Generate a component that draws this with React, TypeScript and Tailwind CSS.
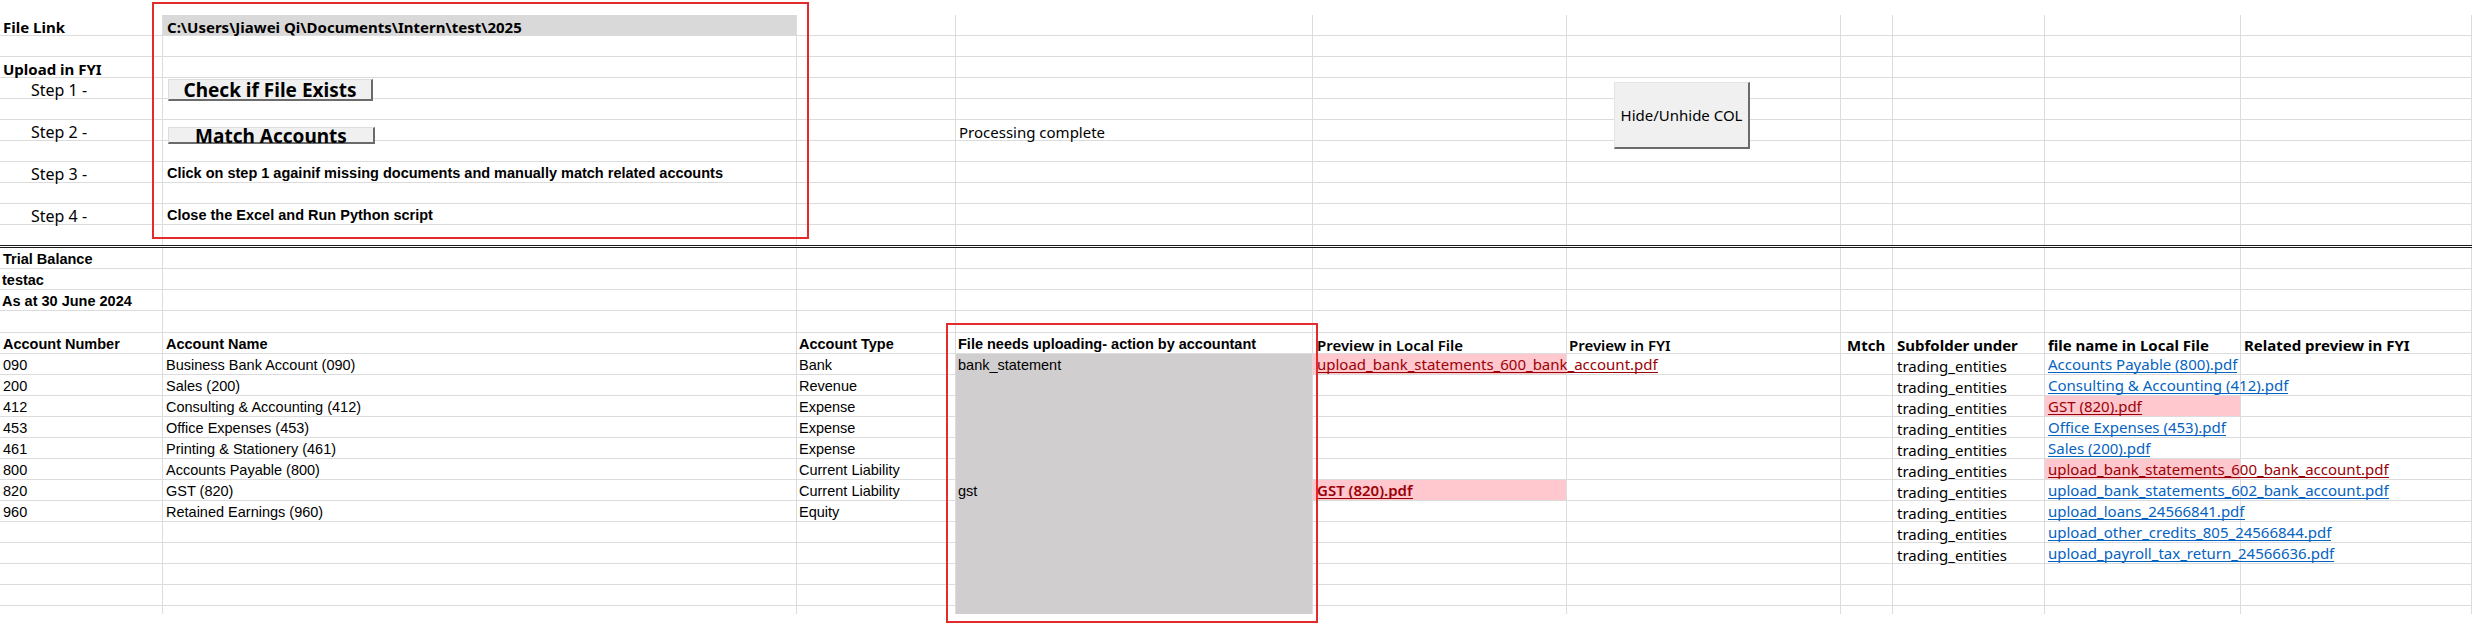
import React from 'react';

type C = { t?: React.ReactNode; c?: string };

// column widths incl. the 1px right grid line
const W = ['w-[163px]', 'w-[634px]', 'w-[159px]', 'w-[357px]', 'w-[254px]', 'w-[274px]', 'w-[52px]', 'w-[152px]', 'w-[196px]', 'grow'];

const noto = "shrink-0 font-['Noto_Sans',sans-serif] text-[15px] leading-[16px]";
const arial = "shrink-0 font-['Liberation_Sans',Arial,sans-serif] text-[14.5px] leading-[16px] mb-[1px]";
const gray = 'bg-[#d0cece] border-b-[#d0cece]';
const pink = 'bg-[#ffc7ce]';
const blue = 'text-[#0563c1] border-b border-[#0563c1] leading-[15px]';
const red = 'text-[#9c0006] border-b border-[#9c0006] leading-[15px]';

function Row({ cells = {}, h = 'h-[21px]', noLine = false }: { cells?: Record<number, C>; h?: string; noLine?: boolean }) {
    return (
        <div className={`flex ${h}`}>
            {W.map((w, i) => {
                const cell = cells[i] || {};
                return (
                    <div
                        key={i}
                        className={`${w} shrink-0 border-r border-[#dcdcdc] ${noLine ? '' : 'border-b'} flex items-end whitespace-nowrap ${cell.c ?? ''}`}
                    >
                        {cell.t}
                    </div>
                );
            })}
        </div>
    );
}

const N = (t: string, extra = '') => <span className={`${noto} ${extra}`}>{t}</span>;
const A = (t: string, extra = '') => <span className={`${arial} ${extra}`}>{t}</span>;

const accounts = [
    ['090', 'Business Bank Account (090)', 'Bank'],
    ['200', 'Sales (200)', 'Revenue'],
    ['412', 'Consulting & Accounting (412)', 'Expense'],
    ['453', 'Office Expenses (453)', 'Expense'],
    ['461', 'Printing & Stationery (461)', 'Expense'],
    ['800', 'Accounts Payable (800)', 'Current Liability'],
    ['820', 'GST (820)', 'Current Liability'],
    ['960', 'Retained Earnings (960)', 'Equity'],
];

const localFiles = [
    'Accounts Payable (800).pdf',
    'Consulting & Accounting (412).pdf',
    'GST (820).pdf',
    'Office Expenses (453).pdf',
    'Sales (200).pdf',
    'upload_bank_statements_600_bank_account.pdf',
    'upload_bank_statements_602_bank_account.pdf',
    'upload_loans_24566841.pdf',
    'upload_other_credits_805_24566844.pdf',
    'upload_payroll_tax_return_24566636.pdf',
];

const missing = [2, 5];

function dataRow(i: number): Record<number, C> {
    const acc = accounts[i];
    const cells: Record<number, C> = { 3: { c: gray } };
    if (acc) {
        cells[0] = { t: A(acc[0]), c: 'pl-[3px]' };
        cells[1] = { t: A(acc[1]), c: 'pl-[3px]' };
        cells[2] = { t: A(acc[2]), c: 'pl-[2px]' };
    }
    if (i === 0) {
        cells[3] = { t: A('bank_statement'), c: `${gray} pl-[2px]` };
        cells[4] = { t: N('upload_bank_statements_600_bank_account.pdf', red), c: `${pink} pl-[4px] pb-[1px]` };
    }
    if (i === 6) {
        cells[3] = { t: A('gst'), c: `${gray} pl-[2px]` };
        cells[4] = { t: N('GST (820).pdf', `${red} font-semibold`), c: `${pink} pl-[4px] pb-[1px]` };
    }
    const f = localFiles[i];
    if (f) {
        cells[7] = { t: N('trading_entities'), c: 'pl-[4px]' };
        const bad = missing.includes(i);
        cells[8] = { t: N(f, bad ? red : blue), c: `pl-[3px] pb-[1px] ${bad ? pink : ''}` };
    }
    return cells;
}

export default function App() {
    const head = `${noto} font-bold`;
    const note = "font-['Liberation_Sans',Arial,sans-serif] text-[14.5px] leading-[16px] font-bold mb-[1px]";
    return (
        <div className="relative w-[2472px] h-[624px] bg-white overflow-hidden text-black">
            <div className="h-[15px]" />

            {/* control panel */}
            <Row
                cells={{
                    0: { t: N('File Link', 'font-bold'), c: 'pl-[3px]' },
                    1: { t: N('C:\\Users\\Jiawei Qi\\Documents\\Intern\\test\\2025', 'font-bold'), c: 'bg-[#d9d9d9] pl-[4px]' },
                }}
            />
            <Row />
            <Row cells={{ 0: { t: N('Upload in FYI', 'font-bold'), c: 'pl-[3px]' } }} />
            <Row cells={{ 0: { t: N('Step 1 -', 'text-[16px]'), c: 'pl-[31px]' } }} />
            <Row />
            <Row cells={{ 0: { t: N('Step 2 -', 'text-[16px]'), c: 'pl-[31px]' }, 3: { t: N('Processing complete'), c: 'pl-[3px]' } }} />
            <Row />
            <Row
                cells={{
                    0: { t: N('Step 3 -', 'text-[16px]'), c: 'pl-[31px]' },
                    1: { t: <span className={note}>Click on step 1 againif missing documents and manually match related accounts</span>, c: 'pl-[4px]' },
                }}
            />
            <Row />
            <Row
                cells={{
                    0: { t: N('Step 4 -', 'text-[16px]'), c: 'pl-[31px]' },
                    1: { t: <span className={note}>Close the Excel and Run Python script</span>, c: 'pl-[4px]' },
                }}
            />
            <div className="border-b-[3px] border-double border-[#1a1a1a]">
                <Row h="h-[20px]" noLine />
            </div>

            {/* trial balance */}
            <Row cells={{ 0: { t: A('Trial Balance', 'font-bold'), c: 'pl-[3px]' } }} />
            <Row cells={{ 0: { t: A('testac', 'font-bold'), c: 'pl-[2px]' } }} />
            <Row cells={{ 0: { t: A('As at 30 June 2024', 'font-bold'), c: 'pl-[2px]' } }} />
            <Row h="h-[22px]" />
            <Row
                cells={{
                    0: { t: A('Account Number', 'font-bold'), c: 'pl-[3px]' },
                    1: { t: A('Account Name', 'font-bold'), c: 'pl-[3px]' },
                    2: { t: A('Account Type', 'font-bold'), c: 'pl-[2px]' },
                    3: { t: A('File needs uploading- action by accountant', 'font-bold'), c: 'pl-[2px]' },
                    4: { t: N('Preview in Local File', 'font-semibold'), c: 'pl-[4px]' },
                    5: { t: N('Preview in FYI', 'font-semibold'), c: 'pl-[2px]' },
                    6: { t: <span className={head}>Mtch</span>, c: 'pl-[6px]' },
                    7: { t: <span className={head}>Subfolder under</span>, c: 'pl-[4px]' },
                    8: { t: <span className={head}>file name in Local File</span>, c: 'pl-[3px]' },
                    9: { t: <span className={head}>Related preview in FYI</span>, c: 'pl-[3px]' },
                }}
            />
            {Array.from({ length: 12 }, (_, i) => (
                <Row key={i} cells={dataRow(i)} />
            ))}
            <Row h="h-[8px]" noLine cells={{ 3: { c: gray } }} />

            {/* form buttons */}
            <div className="absolute left-[168px] top-[79px] w-[205px] h-[22px] bg-[#f0f0f0] border border-[#dedede] border-r-2 border-b-2 border-r-[#6b6b6b] border-b-[#6b6b6b] flex justify-center items-center">
                <span className="font-['Noto_Sans',sans-serif] text-[19px] leading-[20px] font-bold">Check if File Exists</span>
            </div>
            <div className="absolute left-[168px] top-[127px] w-[207px] h-[17px] bg-[#f0f0f0] border border-[#dedede] border-r-2 border-b-2 border-r-[#6b6b6b] border-b-[#6b6b6b] flex justify-center items-start">
                <span className="font-['Noto_Sans',sans-serif] text-[19px] leading-[18px] font-bold -mt-[1px]">Match Accounts</span>
            </div>
            <div className="absolute left-[1614px] top-[82px] w-[136px] h-[67px] bg-[#f0f0f0] border border-[#e4e4e4] border-r-2 border-b-2 border-r-[#6b6b6b] border-b-[#6b6b6b] flex items-center justify-center">
                <span className="font-['Noto_Sans',sans-serif] text-[15px]">Hide/Unhide COL</span>
            </div>

            {/* highlight boxes */}
            <div className="absolute left-[152px] top-[2px] w-[657px] h-[237px] border-2 border-[#e42b2b]" />
            <div className="absolute left-[946px] top-[323px] w-[372px] h-[300px] border-2 border-[#e42b2b]" />
        </div>
    );
}
